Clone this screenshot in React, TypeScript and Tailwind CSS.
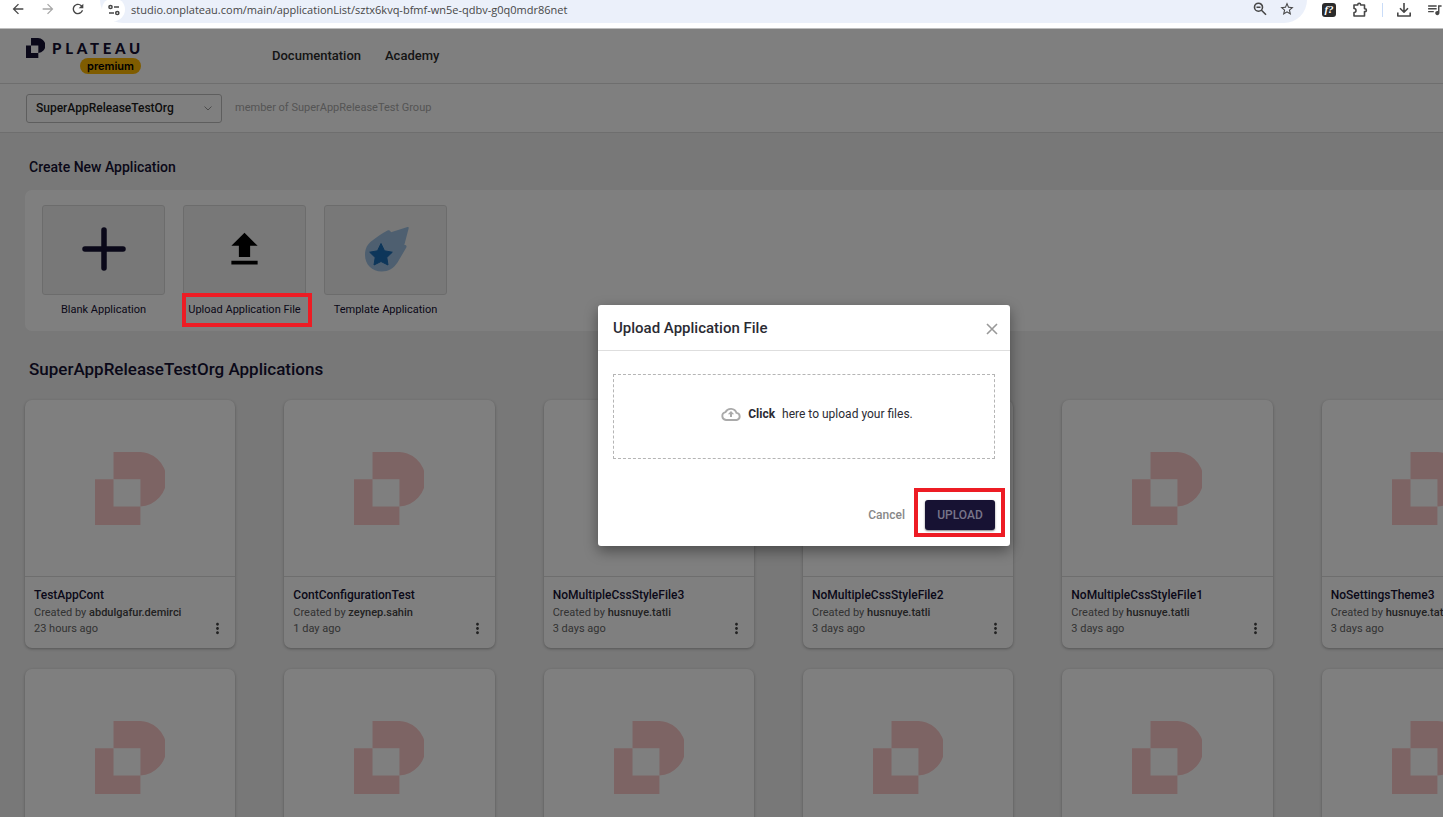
import type { ReactNode } from "react";
import {
  MdArrowBack,
  MdArrowForward,
  MdMoreVert,
  MdQueueMusic,
  MdRefresh,
  MdStarBorder,
  MdUpload,
} from "react-icons/md";

type AppInfo = { name?: string; author?: string; age?: string };

const firstRow: AppInfo[] = [
  { name: "TestAppCont", author: "abdulgafur.demirci", age: "23 hours ago" },
  { name: "ContConfigurationTest", author: "zeynep.sahin", age: "1 day ago" },
  { name: "NoMultipleCssStyleFile3", author: "husnuye.tatli", age: "3 days ago" },
  { name: "NoMultipleCssStyleFile2", author: "husnuye.tatli", age: "3 days ago" },
  { name: "NoMultipleCssStyleFile1", author: "husnuye.tatli", age: "3 days ago" },
  { name: "NoSettingsTheme3", author: "husnuye.tatli", age: "3 days ago" },
];
const apps: AppInfo[] = [...firstRow, {}, {}, {}, {}, {}, {}];

function PlateauMark({ className }: { className: string }) {
  return (
    <svg viewBox="0 0 208 217" className={className} fill="currentColor" aria-hidden="true">
      <path d="M55 0H127A81 81 0 0 1 135 162V81H55Z" />
      <path d="M0 81H55V162H135V217H0Z" />
    </svg>
  );
}

function SiteSettingsIcon() {
  return (
    <svg viewBox="0 0 12 12" className="size-3" fill="none" stroke="currentColor" strokeWidth="1.5" aria-hidden="true">
      <circle cx="2.5" cy="3" r="1.6" />
      <path d="M6 3h5M1 9h5" />
      <circle cx="9.3" cy="9" r="1.6" />
    </svg>
  );
}

function LineIcon({ d }: { d: string }) {
  return (
    <svg viewBox="0 0 16 16" className="size-4" fill="none" stroke="currentColor" strokeWidth="1.6" strokeLinejoin="round" aria-hidden="true">
      <path d={d} />
    </svg>
  );
}

function CometIcon() {
  return (
    <svg viewBox="0 0 46 46" className="size-[46px]" aria-hidden="true">
      <path
        d="M44.500 1.100C45.400 .8 46 1.300 45.700 2.200L41.300 19C43 19 44 19.800 43.300 21.500L34.500 36.500C30.500 42.500 25.500 45.500 18.700 45.500C9 45.500 2 38.500 2 29C2 22.500 4.500 18 9 14.800C14 11 19 7.500 24.500 4.500C26.500 3.500 27.500 4.700 28 6.300Z"
        fill="#9cbfe0"
      />
      <path
        d="M18 17.500L21.500 24.800L29.300 26.200L23.800 31.500L25 39L18 35.500L11 39L12.200 31.500L6.700 26.200L14.500 24.800Z"
        fill="#1a6cb5"
        stroke="#1a6cb5"
        strokeLinejoin="round"
      />
    </svg>
  );
}

function BrowserBar() {
  return (
    <div className="flex h-[29px] shrink-0 items-start overflow-hidden border-b border-[#bdbdbd] bg-white text-[#474747]">
      <button aria-label="Back" className="ml-[10px] mt-px"><MdArrowBack size={16} /></button>
      <button aria-label="Forward" className="ml-[14px] mt-px text-[#a8a8a8]"><MdArrowForward size={16} /></button>
      <button aria-label="Reload" className="ml-[14px] mt-px"><MdRefresh size={16} /></button>
      <div className="ml-[14px] flex h-[23px] flex-1 items-start rounded-b-full bg-[#ebf0fa] pl-[2px]">
        <button aria-label="Site settings" className="-mt-[2px] flex size-[23px] items-center justify-center rounded-full bg-white">
          <SiteSettingsIcon />
        </button>
        <input
          aria-label="Address"
          readOnly
          value="studio.onplateau.com/main/applicationList/sztx6kvq-bfmf-wn5e-qdbv-g0q0mdr86net"
          className="ml-[6px] h-5 min-w-0 flex-1 bg-transparent font-['Open_Sans',sans-serif] text-[11px] leading-5 outline-none"
        />
        <button aria-label="Zoom" className="mt-px"><LineIcon d="M6.500 2.200a4 4 0 1 1 0 8a4 4 0 1 1 0-8M4.500 6.200h4M9.500 9.200L14 13.700" /></button>
        <button aria-label="Bookmark" className="ml-[11px] mr-3 mt-px"><MdStarBorder size={16} /></button>
      </div>
      <div className="flex w-[136px] items-center pl-[15px] pt-px">
        <button aria-label="Font finder" className="flex size-[14px] items-center justify-center rounded-[3px] bg-[#2b2b2b] font-['Liberation_Serif',serif] text-[11px] font-bold italic leading-none text-white">
          f?
        </button>
        <button aria-label="Extensions" className="ml-4"><LineIcon d="M2 3H5.800V2.600a1.400 1.400 0 0 1 2.800 0V3H12.500V6.800H13a1.400 1.400 0 0 1 0 2.800H12.500V14H2V10.500a2 2 0 0 0 0-4Z" /></button>
        <span className="ml-[14px] h-[14px] w-px bg-[#c9dcf8]" />
        <button aria-label="Downloads" className="ml-[13px]"><LineIcon d="M8 1V10M4 6.200L8 10.200L12 6.200M1.800 10.500V14H14.200V10.500" /></button>
        <button aria-label="Media" className="ml-[14px]"><MdQueueMusic size={17} /></button>
      </div>
    </div>
  );
}

function CreateTile({ label, children, marked }: { label: string; children: ReactNode; marked?: boolean }) {
  return (
    <button className="relative flex w-[123px] flex-col items-center text-[#141032]">
      <span className="flex h-[90px] w-full items-center justify-center rounded-[3px] border border-[#d9d9d9] bg-[#f0f0f0] pb-[2px]">
        {children}
      </span>
      <span className="mt-[5px] whitespace-nowrap text-[11px] leading-5">{label}</span>
      {marked && <span className="absolute -left-px -right-[6px] top-[88px] z-30 h-[34px] border-4 border-[#ed1c24]" />}
    </button>
  );
}

function AppCard({ app }: { app: AppInfo }) {
  return (
    <article className="mr-[49px] flex h-[248px] flex-col rounded-[7px] bg-white shadow-[0_1px_3px_rgba(0,0,0,0.3)]">
      <div className="flex h-[177px] shrink-0 items-center justify-center border-b border-[#dcdcdc] text-[#fbc9c9]">
        <PlateauMark className="h-[73px] w-[70px]" />
      </div>
      {app.name && (
        <div className="flex items-end justify-between px-[9px] pt-[9px] text-[11px] leading-4 text-[#666]">
          <div className="whitespace-nowrap">
            <h3 className="text-[12px] font-medium leading-[19px] text-[#141032]">{app.name}</h3>
            <p>Created by <b className="font-medium text-[#444]">{app.author}</b></p>
            <p>{app.age}</p>
          </div>
          <button aria-label={"Options for " + app.name} className="text-[#444]"><MdMoreVert size={17} /></button>
        </div>
      )}
    </article>
  );
}

function UploadDialog() {
  return (
    <section role="dialog" aria-label="Upload Application File" className="w-[412px] rounded-[3px] bg-white text-[#2b2b33] shadow-[0_5px_14px_rgba(0,0,0,0.4)]">
      <header className="flex h-[46px] items-center justify-between border-b border-[#dedede] pl-[15px] pr-3 pt-[3px]">
        <h2 className="text-[15px] font-medium">Upload Application File</h2>
        <button aria-label="Close" className="text-[#999]">
          <svg viewBox="0 0 12 12" className="size-3" stroke="currentColor" strokeWidth="1.6" aria-hidden="true">
            <path d="M1 1l10 10M11 1L1 11" />
          </svg>
        </button>
      </header>
      <div className="px-[15px] pb-4 pt-[23px]">
        <button className="flex h-[85px] w-full items-center justify-center border border-dashed border-[#b5b5b5] pb-1 pl-[26px] text-[12px]">
          <svg viewBox="0 0 20 14" className="mr-[7px] h-[14px] w-5 text-[#aaa]" fill="none" stroke="currentColor" strokeWidth="1.9" aria-hidden="true">
            <path d="M5 13A4 4 0 0 1 4.500 5.100A6 6 0 0 1 15.500 5.900A3.600 3.600 0 0 1 15.800 13Z" />
            <path d="M10 4L6.800 7.300H9V10H11V7.300H13.200Z" fill="currentColor" stroke="none" />
          </svg>
          <b className="mr-[7px] font-bold">Click</b>
          <span>here to upload your files.</span>
        </button>
        <div className="mt-[41px] flex items-center justify-end gap-5 text-[12px] font-medium">
          <button className="text-[#888]">Cancel</button>
          <div className="relative">
            <button className="h-[30px] w-[70px] rounded-[3px] bg-[#171233] text-[#77758a] shadow-[0_1px_2px_rgba(0,0,0,0.5)]">UPLOAD</button>
            <span className="pointer-events-none absolute -bottom-[7px] -left-[11px] -right-[10px] -top-3 border-4 border-[#ed1c24]" />
          </div>
        </div>
      </div>
    </section>
  );
}

export default function App() {
  return (
    <div className="flex h-screen flex-col overflow-hidden font-[Roboto,sans-serif]">
      <BrowserBar />
      <div className="relative min-h-0 min-w-[1608px] flex-1 self-start overflow-hidden bg-[#f0f0f0]">
        <header className="flex h-[55px] items-center border-b border-[#dcdcdc] bg-white pl-[26px]">
          <div className="flex w-[115px] flex-col text-[#141032]">
            <div className="flex items-start gap-[7px]">
              <PlateauMark className="h-5 w-[19px] shrink-0" />
              <span className="pt-[2px] font-[Lato,sans-serif] text-[15px] font-black leading-4 tracking-[0.25em]">PLATEAU</span>
            </div>
            <span className="h-4 self-end rounded-full bg-[#ffb800] px-[7px] font-[Inter,sans-serif] text-[11px] font-semibold leading-4 text-black">premium</span>
          </div>
          <nav className="ml-[131px] flex gap-6 text-[13px] font-medium text-[#2b2b2b]">
            <a href="#documentation">Documentation</a>
            <a href="#academy">Academy</a>
          </nav>
        </header>
        <div className="flex h-[49px] items-center border-b border-[#dcdcdc] bg-white pl-[26px] text-[12px]">
          <div className="relative">
            <select aria-label="Organization" className="h-[29px] w-[196px] appearance-none rounded-[3px] border border-[#bdbdbd] bg-white pl-[9px] font-medium text-[#1c1c1c]">
              <option>SuperAppReleaseTestOrg</option>
            </select>
            <svg viewBox="0 0 8 5" className="pointer-events-none absolute right-[10px] top-3 h-[5px] w-2" fill="none" stroke="#999" aria-hidden="true">
              <path d="M.5 .5L4 4L7.500 .5" />
            </svg>
          </div>
          <p className="ml-[13px] text-[11px] text-[#aaa]">member of SuperAppReleaseTest Group</p>
        </div>
        <main className="pl-[25px] pr-[27px]">
          <h2 className="pl-1 pt-6 text-[14px] font-medium leading-5 text-[#141032]">Create New Application</h2>
          <div className="mt-[13px] flex h-[141px] gap-[18px] rounded-[7px] bg-white pl-[17px] pt-[15px]">
            <CreateTile label="Blank Application">
              <svg viewBox="0 0 44 44" className="size-11" stroke="currentColor" strokeWidth="5.5" strokeLinecap="round" aria-hidden="true">
                <path d="M22 3V41M3 22H41" />
              </svg>
            </CreateTile>
            <CreateTile label="Upload Application File" marked><MdUpload size={45} color="#000" /></CreateTile>
            <CreateTile label="Template Application"><CometIcon /></CreateTile>
          </div>
          <h2 className="mt-[26px] pl-1 text-[17px] font-medium leading-6 text-[#141032]">SuperAppReleaseTestOrg Applications</h2>
          <div className="mt-[19px] grid grid-cols-6 gap-y-[21px]">
            {apps.map((app, i) => <AppCard key={i} app={app} />)}
          </div>
        </main>
        <div className="absolute inset-0 z-20 flex items-center justify-center bg-black/50 pt-1">
          <UploadDialog />
        </div>
      </div>
    </div>
  );
}
